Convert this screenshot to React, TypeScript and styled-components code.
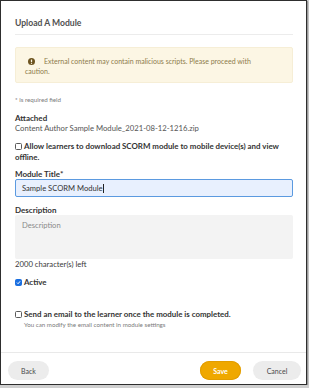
import React from "react";
import styled, { createGlobalStyle } from "styled-components";

const GlobalStyle = createGlobalStyle`
  html, body {
    margin: 0;
    padding: 0;
    background: #cfcfcf;
  }
  body {
    font-family: Lato, "Open Sans", sans-serif;
    -webkit-font-smoothing: antialiased;
  }
`;

const Dialog = styled.div`
  width: 307px;
  height: 385px;
  box-sizing: border-box;
  border: 1px solid #2e2e2e;
  background: #fff;
  display: flex;
  flex-direction: column;
  box-shadow: 1px 1px 0 #9a9a9a, 2px 2px 0 #c4c4c4;
`;

const Header = styled.div`
  margin: 0 13px 0 14px;
  padding: 16px 0 5px;
  border-bottom: 1px solid #ececec;
`;

const Title = styled.h1`
  margin: 0;
  font-size: 8.6px;
  line-height: 12px;
  font-weight: 700;
  color: #505050;
`;

const Body = styled.div`
  flex: 1;
  padding: 0 13px 0 14px;
  display: flex;
  flex-direction: column;
`;

const Warning = styled.div`
  margin-top: 12px;
  padding: 8px 9px 6px;
  background: #fcf6e4;
  border: 1px solid #f6eed6;
  border-radius: 2px;
  font-size: 7px;
  line-height: 10px;
  color: #8d7b4b;
`;

const AlertIcon = styled.svg`
  width: 7px;
  height: 7px;
  margin: 0 9px 0 3px;
  vertical-align: -1px;
`;

const Note = styled.div<{ gap: number; indent?: number }>`
  margin-top: ${({ gap }) => gap}px;
  margin-left: ${({ indent = 0 }) => indent}px;
  font-size: 6.2px;
  line-height: 10px;
  color: #7a7a7a;
`;

const Label = styled.div<{ gap: number }>`
  margin-top: ${({ gap }) => gap}px;
  font-size: 8px;
  line-height: 10px;
  font-weight: 700;
  color: #333;
`;

const Text = styled.div<{ gap?: number; tone?: string }>`
  margin-top: ${({ gap = 0 }) => gap}px;
  font-size: 7.7px;
  line-height: 10px;
  color: ${({ tone = "#555" }) => tone};
`;

const CheckRow = styled.label<{ gap: number }>`
  margin-top: ${({ gap }) => gap}px;
  display: block;
  font-size: 7.9px;
  line-height: 10.5px;
  font-weight: 700;
  color: #333;
`;

const Box = styled.span<{ checked?: boolean }>`
  display: inline-flex;
  align-items: center;
  justify-content: center;
  box-sizing: border-box;
  width: 7px;
  height: 7px;
  margin-right: 2px;
  vertical-align: -0.5px;
  border-radius: 1.5px;
  border: 1px solid ${({ checked }) => (checked ? "#1a6fe0" : "#5a5a5a")};
  background: ${({ checked }) => (checked ? "#1a6fe0" : "#fff")};
`;

const TitleField = styled.div`
  height: 18px;
  box-sizing: border-box;
  padding: 0 6px;
  display: flex;
  align-items: center;
  background: #e8f0fe;
  border: 1px solid #5b9ae0;
  border-radius: 2px;
  font-size: 7.6px;
  color: #333;
`;

const Caret = styled.span`
  width: 1px;
  height: 9px;
  background: #222;
  margin-left: 0.5px;
`;

const DescField = styled.div`
  height: 44px;
  box-sizing: border-box;
  padding: 5px 7px;
  background: #f3f3f3;
  border-radius: 2px;
  font-size: 7.6px;
  line-height: 10px;
  color: #8a8a8a;
`;

const Footer = styled.div`
  border-top: 1px solid #e9e9e9;
  padding: 8px 5px 0 7px;
  height: 32px;
  box-sizing: border-box;
  display: flex;
  align-items: flex-start;
  gap: 12px;
`;

const Pill = styled.button<{ primary?: boolean; width: number }>`
  width: ${({ width }) => width}px;
  height: 19px;
  border: none;
  border-radius: 10px;
  padding: 0;
  font-family: Lato, "Open Sans", sans-serif;
  font-size: 7px;
  font-weight: ${({ primary }) => (primary ? 700 : 400)};
  color: ${({ primary }) => (primary ? "#fff" : "#4a4a4a")};
  background: ${({ primary }) => (primary ? "#efa800" : "#ececec")};
  box-shadow: ${({ primary }) => (primary ? "inset 0 0 0 1px #e29d00" : "none")};
`;

const Spacer = styled.div`
  flex: 1;
`;

const Check = () => (
  <svg width="5" height="5" viewBox="0 0 10 10">
    <path d="M2 5.2 L4.2 7.4 L8.2 2.6" fill="none" stroke="#fff" strokeWidth="2" />
  </svg>
);

export default function App() {
  return (
    <>
      <GlobalStyle />
      <Dialog>
        <Header>
          <Title>Upload A Module</Title>
        </Header>
        <Body>
          <Warning>
            <AlertIcon viewBox="0 0 10 10">
              <circle cx="5" cy="5" r="5" fill="#6d5420" />
              <rect x="4.1" y="2" width="1.8" height="4" rx="0.6" fill="#fcf6e4" />
              <circle cx="5" cy="7.6" r="0.95" fill="#fcf6e4" />
            </AlertIcon>
            External content may contain malicious scripts. Please proceed with
            <br />
            caution.
          </Warning>
          <Note gap={12}>* is required field</Note>
          <Label gap={8}>Attached</Label>
          <Text>Content Author Sample Module_2021-08-12-1216.zip</Text>
          <CheckRow gap={8}>
            <Box />
            Allow learners to download SCORM module to mobile device(s) and view offline.
          </CheckRow>
          <Label gap={7}>Module Title*</Label>
          <TitleField>
            Sample SCORM Module
            <Caret />
          </TitleField>
          <Label gap={7.5}>Description</Label>
          <DescField>Description</DescField>
          <Text tone="#3a3a3a">2000 character(s) left</Text>
          <CheckRow gap={8.4}>
            <Box checked>
              <Check />
            </Box>
            Active
          </CheckRow>
          <CheckRow gap={22}>
            <Box />
            Send an email to the learner once the module is completed.
          </CheckRow>
          <Note gap={0} indent={9}>
            You can modify the email content in module settings
          </Note>
        </Body>
        <Footer>
          <Pill width={41}>Back</Pill>
          <Spacer />
          <Pill primary width={41}>Save</Pill>
          <Pill width={48}>Cancel</Pill>
        </Footer>
      </Dialog>
    </>
  );
}
